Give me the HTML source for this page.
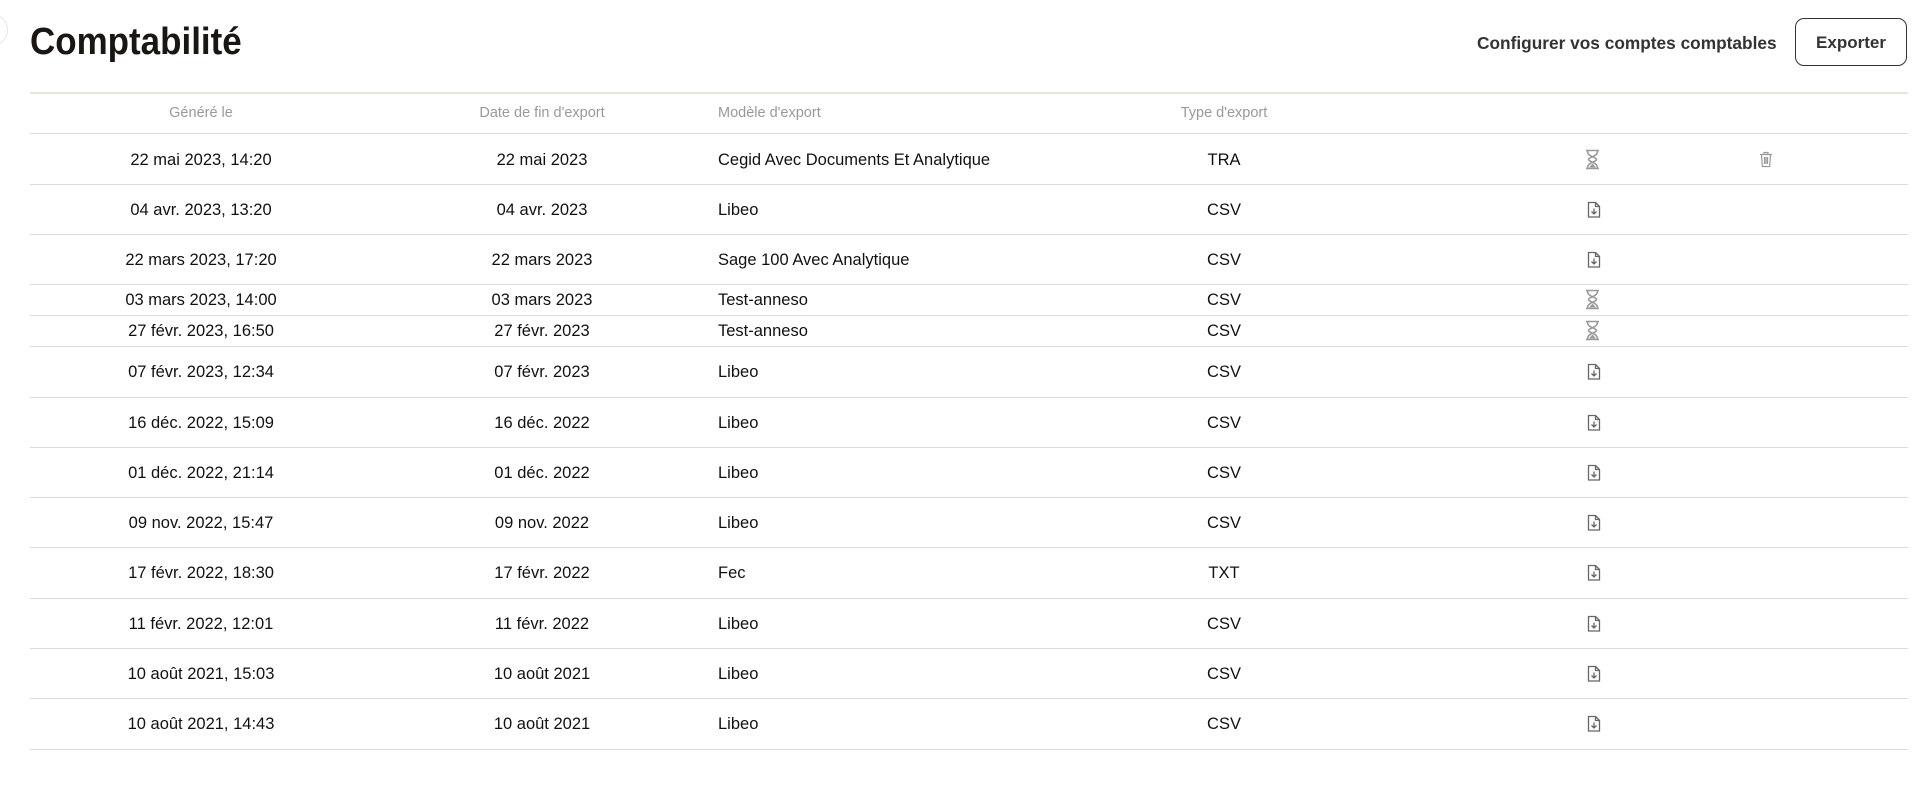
<!DOCTYPE html>
<html><head><meta charset="utf-8"><style>
body{margin:0;width:1920px;height:807px;background:#fff;font-family:"Liberation Sans",sans-serif;position:relative;overflow:hidden;color:#111}
.t{position:absolute;left:30px;top:21px;font-family:"Liberation Sans Narrow","Liberation Sans",sans-serif;font-weight:bold;font-size:38px;color:#1a1614;transform:scaleX(0.92);transform-origin:left top}
.cfg{position:absolute;left:1477px;top:33px;font-weight:bold;font-size:17.3px;color:#333}
.btn{position:absolute;left:1795px;top:18px;width:112px;height:48px;border:1.5px solid #333;border-radius:9px;box-sizing:border-box;font-weight:bold;font-size:17px;color:#333;text-align:center;line-height:47px}
.ln{position:absolute;left:30px;width:1878px;height:1px;background:#ddddd8}
.c{position:absolute;font-size:16.5px;white-space:nowrap}
.h{position:absolute;font-size:14.5px;color:#999;white-space:nowrap}
.ctr{transform:translateX(-50%)}
svg{position:absolute}
.circ{position:absolute;left:-24px;top:14px;width:30px;height:30px;border:1px solid #e6e6e6;border-radius:50%}
</style></head><body>
<div class="circ"></div>
<div class="t">Comptabilité</div>
<div class="cfg">Configurer vos comptes comptables</div>
<div class="btn">Exporter</div>

<div class="ln" style="top:92px;height:2px;background:#e6e6e1"></div>
<div class="h ctr" style="left:201px;top:105px">Généré le</div>
<div class="h ctr" style="left:542px;top:105px">Date de fin d'export</div>
<div class="h" style="left:718px;top:105px">Modèle d'export</div>
<div class="h ctr" style="left:1224px;top:105px">Type d'export</div>
<div class="ln" style="top:133px"></div>

<div id="rows"></div>
<script>
var rows=[
["22 mai 2023, 14:20","22 mai 2023","Cegid Avec Documents Et Analytique","TRA","h",50,true],
["04 avr. 2023, 13:20","04 avr. 2023","Libeo","CSV","f",50],
["22 mars 2023, 17:20","22 mars 2023","Sage 100 Avec Analytique","CSV","f",50],
["03 mars 2023, 14:00","03 mars 2023","Test-anneso","CSV","h",31],
["27 févr. 2023, 16:50","27 févr. 2023","Test-anneso","CSV","h",31],
["07 févr. 2023, 12:34","07 févr. 2023","Libeo","CSV","f",51],
["16 déc. 2022, 15:09","16 déc. 2022","Libeo","CSV","f",50],
["01 déc. 2022, 21:14","01 déc. 2022","Libeo","CSV","f",50],
["09 nov. 2022, 15:47","09 nov. 2022","Libeo","CSV","f",50],
["17 févr. 2022, 18:30","17 févr. 2022","Fec","TXT","f",51],
["11 févr. 2022, 12:01","11 févr. 2022","Libeo","CSV","f",50],
["10 août 2021, 15:03","10 août 2021","Libeo","CSV","f",50],
["10 août 2021, 14:43","10 août 2021","Libeo","CSV","f",51]];
var y=134,h='';
var hg='<path d="M2 1.5h13M2 19.5h13M3.5 2c0 6 9 6 9 8.5S3.5 13 3.5 19M13.5 2c0 6-9 6-9 8.5s9 2.5 9 8.5" stroke="#999" stroke-width="1.6" fill="none"/><path d="M5 18.5l3.5-4 3.5 4z" fill="#999"/>';
var fi='<path d="M1.5 1.5h7l4 4v10.5h-11z M8.5 1.5v4h4" stroke="#666" stroke-width="1.3" fill="none" stroke-linejoin="round"/><path d="M7 7.5v5.5M4.5 10.5l2.5 2.5 2.5-2.5" stroke="#666" stroke-width="1.3" fill="none"/>';
var tr='<path d="M1 3.5h12M5 3.5V1.5h4v2M2.5 3.5l.8 12h7.4l.8-12z M5.5 6v7M7 6v7M8.5 6v7" stroke="#999" stroke-width="1.2" fill="none"/>';
rows.forEach(function(r){
 var m=y+r[5]/2, ty=m-8.5;
 h+='<div class="c ctr" style="left:201px;top:'+ty+'px">'+r[0]+'</div>';
 h+='<div class="c ctr" style="left:542px;top:'+ty+'px">'+r[1]+'</div>';
 h+='<div class="c" style="left:718px;top:'+ty+'px">'+r[2]+'</div>';
 h+='<div class="c ctr" style="left:1224px;top:'+ty+'px">'+r[3]+'</div>';
 if(r[4]=='h') h+='<svg width="17" height="21" style="left:1584px;top:'+(m-10.5)+'px" viewBox="0 0 17 21">'+hg+'</svg>';
 else h+='<svg width="14" height="17" style="left:1587px;top:'+(m-8.5)+'px" viewBox="0 0 14 17">'+fi+'</svg>';
 if(r[6]) h+='<svg width="14" height="17" style="left:1759px;top:'+(m-8.5)+'px" viewBox="0 0 14 17">'+tr+'</svg>';
 y+=r[5];
 h+='<div class="ln" style="top:'+y+'px"></div>';
});
document.getElementById('rows').innerHTML=h;
</script>
</body></html>
